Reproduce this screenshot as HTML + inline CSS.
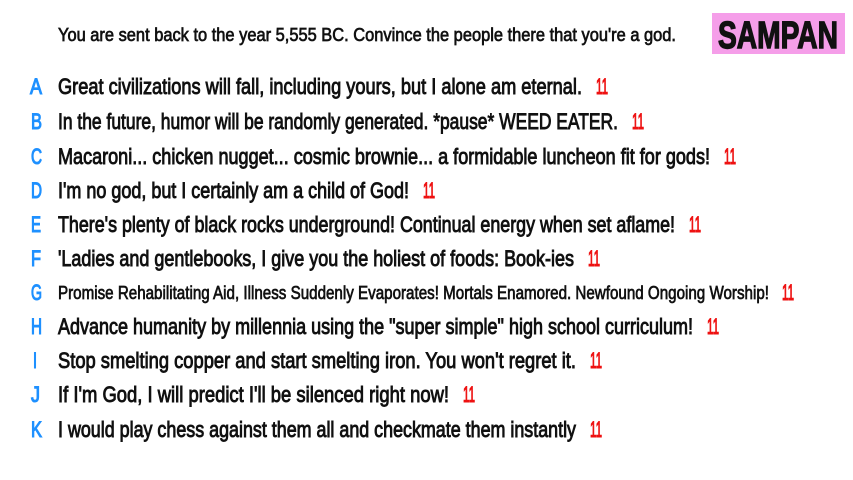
<!DOCTYPE html>
<html><head><meta charset="utf-8"><style>
html,body{margin:0;padding:0;background:#fff;width:853px;height:480px;overflow:hidden}
svg{display:block}
text{font-family:"Liberation Sans",sans-serif;font-weight:normal;stroke-width:0.9px}
.t{fill:#111;stroke:#111;font-size:22px}
.l{fill:#1e90ff;stroke:#1e90ff;font-size:22px;stroke-width:1.1px}
.n{fill:#ee1111;stroke:#ee1111;font-size:22px;stroke-width:1.1px}
</style></head><body>
<svg width="853" height="480" viewBox="0 0 853 480" xmlns="http://www.w3.org/2000/svg">
<text x="58" y="41" style="font-size:18px;fill:#111;stroke:#111;stroke-width:0.7px" textLength="618" lengthAdjust="spacingAndGlyphs">You are sent back to the year 5,555 BC. Convince the people there that you're a god.</text>
<rect x="712" y="13" width="133" height="41" fill="#f59ee9"/>
<text x="718" y="48" style="font-size:38px;fill:#111;stroke:#111;stroke-width:1.4px;font-weight:bold" textLength="120" lengthAdjust="spacingAndGlyphs">SAMPAN</text>

<text class="l" x="30" y="94" textLength="12" lengthAdjust="spacingAndGlyphs">A</text><text class="t" x="58" y="94" textLength="524" lengthAdjust="spacingAndGlyphs">Great civilizations will fall, including yours, but I alone am eternal.</text><text class="n" x="596" y="94" textLength="12" lengthAdjust="spacingAndGlyphs">11</text>
<text class="l" x="31" y="129" textLength="11" lengthAdjust="spacingAndGlyphs">B</text><text class="t" x="58" y="129" textLength="560" lengthAdjust="spacingAndGlyphs">In the future, humor will be randomly generated. *pause* WEED EATER.</text><text class="n" x="632" y="129" textLength="12" lengthAdjust="spacingAndGlyphs">11</text>
<text class="l" x="31" y="164" textLength="11" lengthAdjust="spacingAndGlyphs">C</text><text class="t" x="58" y="164" textLength="652" lengthAdjust="spacingAndGlyphs">Macaroni... chicken nugget... cosmic brownie...  a formidable luncheon fit for gods!</text><text class="n" x="724" y="164" textLength="12" lengthAdjust="spacingAndGlyphs">11</text>
<text class="l" x="31" y="198" textLength="11" lengthAdjust="spacingAndGlyphs">D</text><text class="t" x="58" y="198" textLength="351" lengthAdjust="spacingAndGlyphs">I'm no god, but I certainly am a child of God!</text><text class="n" x="423" y="198" textLength="12" lengthAdjust="spacingAndGlyphs">11</text>
<text class="l" x="31" y="232" textLength="10" lengthAdjust="spacingAndGlyphs">E</text><text class="t" x="58" y="232" textLength="617" lengthAdjust="spacingAndGlyphs">There's plenty of black rocks underground! Continual energy when set aflame!</text><text class="n" x="689" y="232" textLength="12" lengthAdjust="spacingAndGlyphs">11</text>
<text class="l" x="31" y="266" textLength="10" lengthAdjust="spacingAndGlyphs">F</text><text class="t" x="58" y="266" textLength="516" lengthAdjust="spacingAndGlyphs">'Ladies and gentlebooks, I give you the holiest of foods: Book-ies</text><text class="n" x="588" y="266" textLength="12" lengthAdjust="spacingAndGlyphs">11</text>
<text class="l" x="31" y="300" textLength="11" lengthAdjust="spacingAndGlyphs">G</text><text class="t" x="58" y="299" style="font-size:18px;stroke-width:0.7px" textLength="711" lengthAdjust="spacingAndGlyphs">Promise Rehabilitating Aid, Illness Suddenly Evaporates! Mortals Enamored. Newfound Ongoing Worship!</text><text class="n" x="782" y="300" textLength="12" lengthAdjust="spacingAndGlyphs">11</text>
<text class="l" x="31" y="334" textLength="11" lengthAdjust="spacingAndGlyphs">H</text><text class="t" x="58" y="334" textLength="635" lengthAdjust="spacingAndGlyphs">Advance humanity by millennia using the "super simple" high school curriculum!</text><text class="n" x="707" y="334" textLength="12" lengthAdjust="spacingAndGlyphs">11</text>
<text class="l" x="33" y="368" textLength="4" lengthAdjust="spacingAndGlyphs">I</text><text class="t" x="58" y="368" textLength="518" lengthAdjust="spacingAndGlyphs">Stop smelting copper and start smelting iron. You won't regret it.</text><text class="n" x="590" y="368" textLength="12" lengthAdjust="spacingAndGlyphs">11</text>
<text class="l" x="31" y="402" textLength="9" lengthAdjust="spacingAndGlyphs">J</text><text class="t" x="58" y="402" textLength="391" lengthAdjust="spacingAndGlyphs">If I'm God, I will predict I'll be silenced right now!</text><text class="n" x="463" y="402" textLength="12" lengthAdjust="spacingAndGlyphs">11</text>
<text class="l" x="31" y="437" textLength="11" lengthAdjust="spacingAndGlyphs">K</text><text class="t" x="58" y="437" textLength="518" lengthAdjust="spacingAndGlyphs">I would play chess against them all and checkmate them instantly</text><text class="n" x="590" y="437" textLength="12" lengthAdjust="spacingAndGlyphs">11</text>
</svg>
</body></html>
